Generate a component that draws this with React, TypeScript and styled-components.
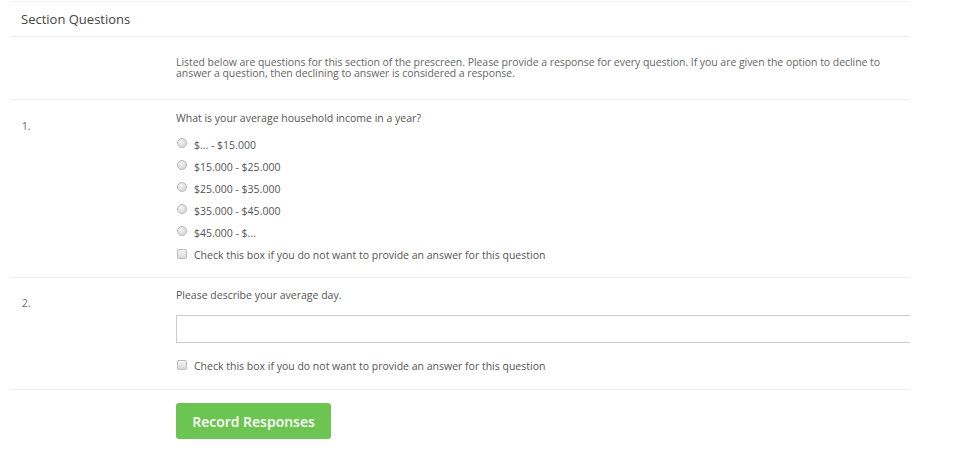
import React from "react";
import styled, { createGlobalStyle } from "styled-components";

const GlobalStyle = createGlobalStyle`
  html, body {
    margin: 0;
    padding: 0;
    background: #ffffff;
  }
  body {
    font-family: "Open Sans", "Liberation Sans", sans-serif;
    color: #555555;
  }
`;

const Panel = styled.div`
  width: 900px;
  margin: 1px 0 0 10px;
  border-top: 1px solid #f0f0f0;
`;

const Heading = styled.div`
  height: 34px;
  padding-left: 11px;
  display: flex;
  align-items: center;
  font-size: 13px;
  color: #444;
  border-bottom: 1px solid #ececec;
`;

const Row = styled.div<{ $pad?: string; $border?: boolean }>`
  display: grid;
  grid-template-columns: 166px 1fr;
  padding: ${(p) => p.$pad || "10px 0 12px"};
  border-bottom: ${(p) => (p.$border === false ? "none" : "1px solid #efefef")};
`;

const Num = styled.div`
  padding-left: 12px;
  padding-top: 8px;
  font-size: 10px;
  color: #666;
`;

const Body = styled.div`
  display: flex;
  flex-direction: column;
`;

const Intro = styled.p`
  margin: 0;
  max-width: 730px;
  font-size: 10.5px;
  line-height: 11px;
  color: #666;
  letter-spacing: -0.05px;
`;

const Question = styled.div<{ $gap?: number }>`
  font-size: 10.5px;
  line-height: 14px;
  color: #555;
  margin-bottom: ${(p) => p.$gap ?? 0}px;
`;

const Option = styled.label`
  display: flex;
  align-items: center;
  height: 22px;
  font-size: 10.5px;
  color: #555;
`;

const Radio = styled.span`
  width: 8px;
  height: 8px;
  border-radius: 50%;
  border: 1px solid #b8b8b8;
  background: radial-gradient(circle at 40% 35%, #f4f4f4, #d0d0d0);
  margin: -4px 7px 0 1px;
`;

const Check = styled.span`
  width: 8px;
  height: 8px;
  border-radius: 2px;
  border: 1px solid #bcbcbc;
  background: linear-gradient(#f4f4f4, #dadada);
  margin: -2px 7px 0 1px;
`;

const TextInput = styled.input`
  box-sizing: border-box;
  width: 100%;
  height: 28px;
  margin: 13px 0 12px;
  border: 1px solid #cccccc;
  border-right: none;
  background: #fff;
  outline: none;
`;

const Button = styled.button`
  width: 155px;
  height: 36px;
  border: none;
  border-radius: 3px;
  background: #6cc550;
  color: #fff;
  font-family: "Open Sans", "Liberation Sans", sans-serif;
  font-size: 14px;
  font-weight: 600;
  cursor: pointer;
`;

const options = [
  "$... - $15.000",
  "$15.000 - $25.000",
  "$25.000 - $35.000",
  "$35.000 - $45.000",
  "$45.000 - $...",
];

const decline = "Check this box if you do not want to provide an answer for this question";

const App = () => {
  return (
    <>
      <GlobalStyle />
      <Panel>
        <Heading>Section Questions</Heading>
        <Row $pad="20px 0 20px">
          <div />
          <Intro>
            Listed below are questions for this section of the prescreen. Please provide a response for
            every question. If you are given the option to decline to answer a question, then declining to
            answer is considered a response.
          </Intro>
        </Row>
        <Row $pad="11px 0 11px">
          <Num>1.</Num>
          <Body>
            <Question $gap={9}>What is your average household income in a year?</Question>
            {options.map((o) => (
              <Option key={o}>
                <Radio />
                {o}
              </Option>
            ))}
            <Option>
              <Check />
              {decline}
            </Option>
          </Body>
        </Row>
        <Row $pad="10px 0 12px">
          <Num>2.</Num>
          <Body>
            <Question>Please describe your average day.</Question>
            <TextInput type="text" />
            <Option>
              <Check />
              {decline}
            </Option>
          </Body>
        </Row>
        <Row $pad="13px 0 0" $border={false}>
          <div />
          <div>
            <Button>Record Responses</Button>
          </div>
        </Row>
      </Panel>
    </>
  );
};

export default App;
